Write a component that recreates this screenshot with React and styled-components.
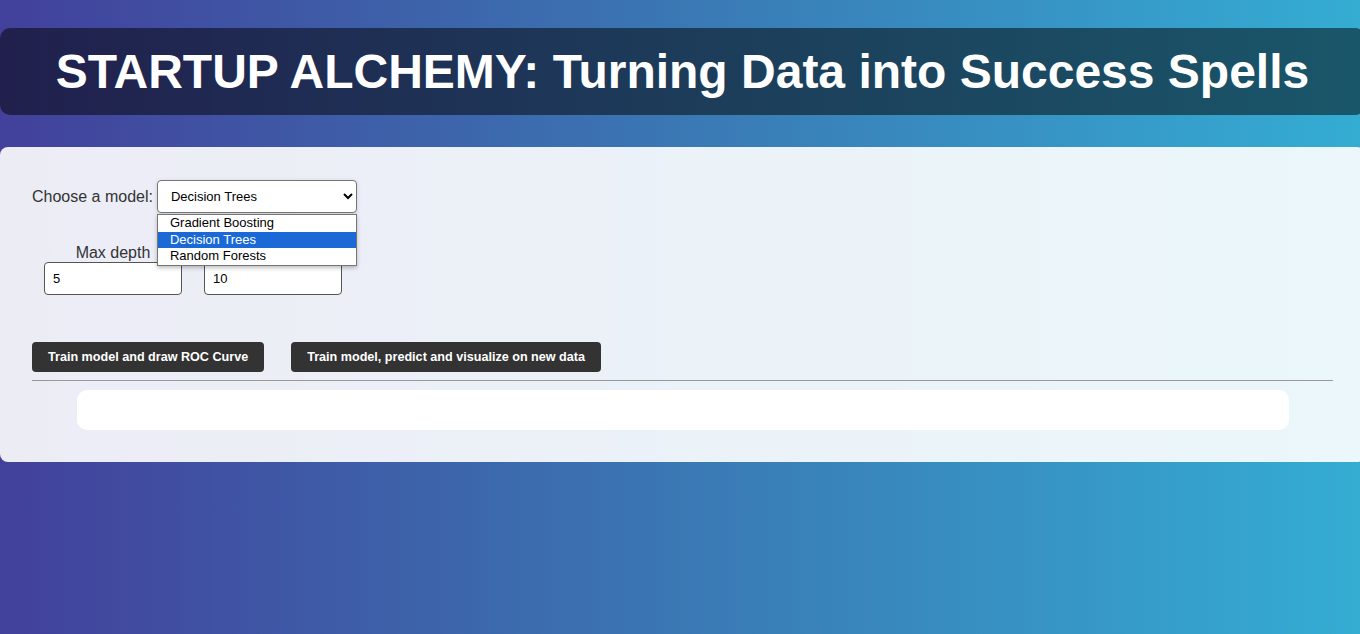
import styled, { createGlobalStyle } from 'styled-components'

const GlobalStyle = createGlobalStyle`
html, body {
  margin: 0;
  padding: 0;
  overflow: hidden;
}
body {
  font-family: "Liberation Sans", Arial, sans-serif;
}
`

const Page = styled.div`
min-height: 634px;
width: 1365px;
padding-top: 28px;
box-sizing: border-box;
background: linear-gradient(to right, #42409b, #3a78b4 50%, #34adD3);
`

const Header = styled.header`
height: 87px;
display: flex;
align-items: center;
justify-content: center;
background: rgba(0, 0, 0, 0.5);
border-radius: 10px;
`

const Title = styled.h1`
margin: 0;
color: #fff;
font-size: 48px;
font-weight: bold;
`

const Card = styled.section`
margin-top: 32px;
padding: 33px 32px 32px;
background: rgba(255, 255, 255, 0.9);
border-radius: 8px;
`

const ModelRow = styled.div`
display: flex;
align-items: center;
gap: 4px;
`

const Label = styled.label`
font-size: 16px;
color: #333;
`

const SelectWrap = styled.div`
position: relative;
`

const Select = styled.select`
width: 200px;
height: 33px;
padding: 0 8px 0 9px;
font-family: "Liberation Sans", Arial, sans-serif;
font-size: 13px;
color: #000;
background: #fff;
border: 1px solid #767676;
border-radius: 4px;
box-shadow: 0 1px 4px rgba(0, 0, 0, 0.15);
`

const Options = styled.ul`
position: absolute;
top: 34px;
left: 0;
width: 200px;
margin: 0;
padding: 0;
list-style: none;
background: #fff;
border: 1px solid #767676;
box-sizing: border-box;
box-shadow: 0 2px 4px rgba(0, 0, 0, 0.25);
z-index: 2;
`

const Option = styled.li`
height: 16.7px;
line-height: 16px;
padding-left: 12px;
font-size: 13px;
color: ${p => (p.$active ? '#fff' : '#000')};
background: ${p => (p.$active ? '#1a69d6' : 'transparent')};
`

const Params = styled.div`
display: flex;
gap: 22px;
margin-top: 31px;
padding-left: 12px;
`

const Param = styled.div`
display: flex;
flex-direction: column;
align-items: center;
`

const ParamLabel = styled.span`
font-size: 16px;
color: #333;
line-height: 18px;
`

const Input = styled.input`
width: 138px;
height: 33px;
box-sizing: border-box;
padding: 0 8px;
font-family: "Liberation Sans", Arial, sans-serif;
font-size: 13px;
border: 1px solid #555;
border-radius: 4px;
background: #fff;
`

const Actions = styled.div`
display: flex;
gap: 27px;
margin-top: 47px;
`

const Button = styled.button`
height: 30px;
padding: 0 16px;
font-family: "Liberation Sans", Arial, sans-serif;
font-size: 12.6px;
font-weight: bold;
color: #fff;
background: #333;
border: none;
border-radius: 4px;
`

const Divider = styled.hr`
margin: 8px 0 0;
border: none;
border-top: 1px solid #999;
`

const Output = styled.div`
margin: 9px 44px 0 45px;
height: 40px;
background: #fff;
border-radius: 10px;
`

const App = () => {
    return (
        <Page>
            <GlobalStyle />
            <Header>
                <Title>STARTUP ALCHEMY: Turning Data into Success Spells</Title>
            </Header>
            <Card>
                <ModelRow>
                    <Label>Choose a model:</Label>
                    <SelectWrap>
                        <Select defaultValue="dt">
                            <option value="gb">Gradient Boosting</option>
                            <option value="dt">Decision Trees</option>
                            <option value="rf">Random Forests</option>
                        </Select>
                        <Options>
                            <Option>Gradient Boosting</Option>
                            <Option $active>Decision Trees</Option>
                            <Option>Random Forests</Option>
                        </Options>
                    </SelectWrap>
                </ModelRow>
                <Params>
                    <Param>
                        <ParamLabel>Max depth</ParamLabel>
                        <Input defaultValue="5" />
                    </Param>
                    <Param>
                        <ParamLabel>Min samples</ParamLabel>
                        <Input defaultValue="10" />
                    </Param>
                </Params>
                <Actions>
                    <Button>Train model and draw ROC Curve</Button>
                    <Button>Train model, predict and visualize on new data</Button>
                </Actions>
                <Divider />
                <Output />
            </Card>
        </Page>
    )
}

export default App
